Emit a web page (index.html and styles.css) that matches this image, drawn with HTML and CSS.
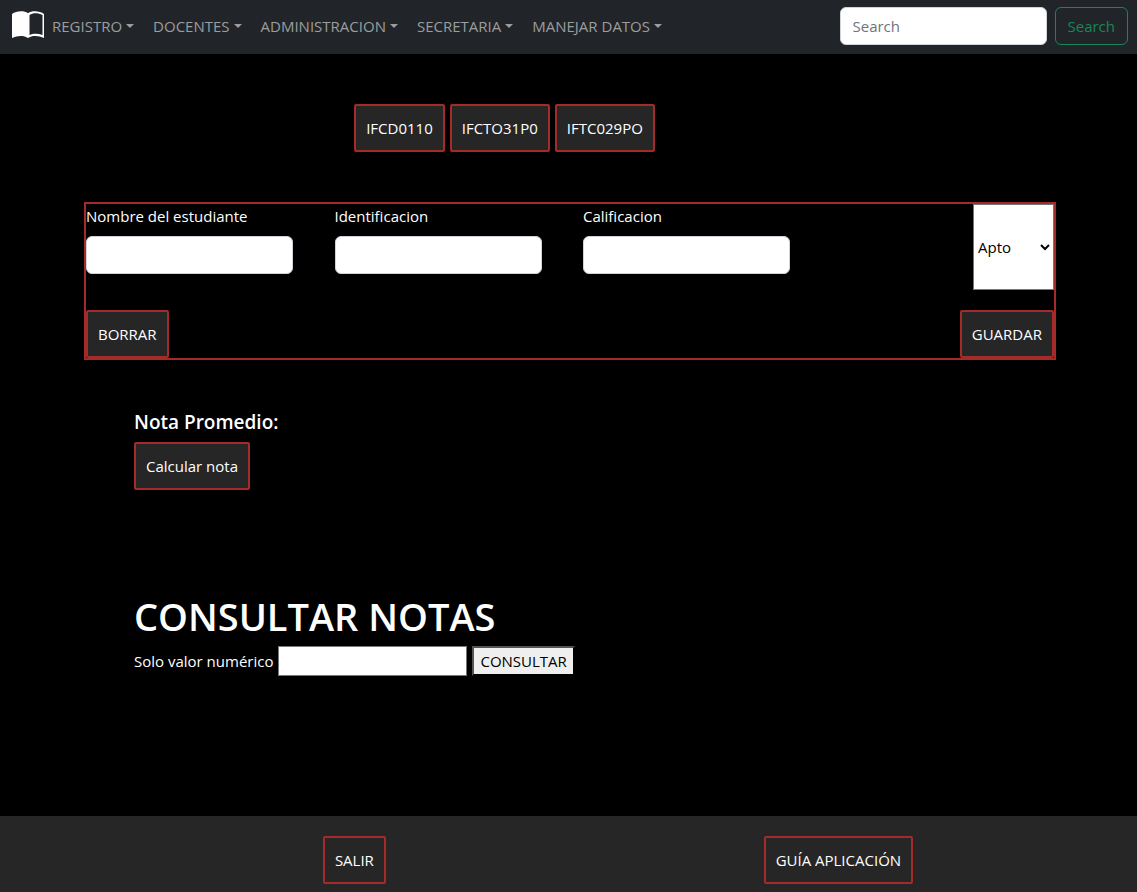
FILE: index.html
```
<!DOCTYPE html>
<html lang="es">
<head>
    <meta charset="UTF-8">
    <meta name="viewport" content="width=device-width, initial-scale=1.0">
    <title>Notas</title>
    <link rel="stylesheet" href="styles.css">
</head>
<body>
    <nav class="navbar">
        <a class="navbar-brand" href="#" aria-label="Inicio">
            <svg width="32" height="28" viewBox="0 0 32 28">
                <path fill="#fff" fill-rule="evenodd" d="M0 3C4 0 12-.7 16 2.300C20-.7 28 0 32 3V27C27 24.500 20 24 16 27C12 24 5 24.500 0 27ZM17.500 4V24C21 22.300 26 22.300 30.500 24V4C26 1.800 21 1.800 17.500 4Z"/>
            </svg>
        </a>
        <ul class="navbar-nav">
            <li><a class="nav-link" href="#">REGISTRO</a></li>
            <li><a class="nav-link" href="#">DOCENTES</a></li>
            <li><a class="nav-link" href="#">ADMINISTRACION</a></li>
            <li><a class="nav-link" href="#">SECRETARIA</a></li>
            <li><a class="nav-link" href="#">MANEJAR DATOS</a></li>
        </ul>
        <form class="search">
            <input class="form-control" type="search" placeholder="Search" aria-label="Search">
            <button class="btn-search" type="button">Search</button>
        </form>
    </nav>

    <main>
        <div class="cursos">
            <button class="boton" type="button">IFCD0110</button>
            <button class="boton" type="button">IFCTO31P0</button>
            <button class="boton" type="button">IFTC029PO</button>
        </div>

        <form class="formulario">
            <div class="campos">
                <div class="campo">
                    <label for="nombre">Nombre del estudiante</label>
                    <input class="form-control" type="text" id="nombre">
                </div>
                <div class="campo">
                    <label for="identificacion">Identificacion</label>
                    <input class="form-control" type="text" id="identificacion">
                </div>
                <div class="campo">
                    <label for="calificacion">Calificacion</label>
                    <input class="form-control" type="text" id="calificacion">
                </div>
                <select class="estado" aria-label="Estado">
                    <option>Apto</option>
                    <option>No apto</option>
                </select>
            </div>
            <div class="acciones">
                <button class="boton" type="button">BORRAR</button>
                <button class="boton" type="button">GUARDAR</button>
            </div>
        </form>

        <section class="promedio">
            <h2>Nota Promedio:</h2>
            <button class="boton" type="button">Calcular nota</button>
        </section>

        <section class="consulta">
            <h1>CONSULTAR NOTAS</h1>
            <form class="consulta-form">
                <label for="valor">Solo valor numérico</label>
                <input type="text" id="valor">
                <button type="button">CONSULTAR</button>
            </form>
        </section>
    </main>

    <footer class="pie">
        <button class="boton" type="button">SALIR</button>
        <button class="boton" type="button">GUÍA APLICACIÓN</button>
    </footer>
</body>
</html>
```
FILE: styles.css
```
* {
    box-sizing: border-box;
}
body {
    margin: 0;
    min-height: 100vh;
    display: flex;
    flex-direction: column;
    background-color: #000;
    color: #fff;
    font-family: 'Segoe UI', 'Open Sans', sans-serif;
    font-size: 15px;
    line-height: 24px;
}
h1, h2 {
    margin: 0;
}
input, select, button {
    font: inherit;
}

/* barra de navegacion */
.navbar {
    display: flex;
    align-items: center;
    min-height: 54px;
    padding: 0 9px 2px 12px;
    background-color: #212529;
}
.navbar-brand {
    display: flex;
    padding-bottom: 2px;
}
.navbar-nav {
    display: flex;
    flex: 1;
    gap: 3px;
    margin: 0;
    padding: 0;
    list-style: none;
}
.nav-link {
    display: block;
    padding: 8px;
    color: #9b9d9e;
    text-decoration: none;
    white-space: nowrap;
}
.nav-link::after {
    content: "";
    display: inline-block;
    margin-left: 4px;
    vertical-align: 4px;
    border-top: 4px solid;
    border-right: 4px solid transparent;
    border-left: 4px solid transparent;
}
.search {
    display: flex;
    gap: 8px;
}
.form-control {
    width: 207px;
    max-width: 100%;
    height: 38px;
    padding: 6px 12px;
    border: 1px solid #ced4da;
    border-radius: 6px;
    background-color: #fff;
    color: #212529;
}
.form-control::placeholder {
    color: #6c757d;
}
.btn-search {
    padding: 6px 12px;
    border: 1px solid #198754;
    border-radius: 6px;
    background-color: transparent;
    color: #198754;
}

.boton {
    padding: 10px;
    border: 2px solid brown;
    border-radius: 2px;
    background-color: #262626;
    color: #fff;
}

main {
    flex: 1;
}
.cursos {
    display: flex;
    justify-content: center;
    gap: 5px;
    padding: 50px 128px 50px 0;
}

/* formulario de notas */
.formulario {
    margin: 0 81px 0 84px;
    border: 2px solid brown;
}
.campos {
    display: grid;
    grid-template-columns: repeat(4, 1fr);
    column-gap: 26px;
    margin-bottom: 20px;
}
.campo {
    margin-bottom: 16px;
}
.campo label {
    display: block;
    margin-bottom: 8px;
}
.estado {
    justify-self: end;
    width: 81px;
    border: 1px solid #767676;
    background-color: #fff;
    color: #000;
}
.acciones {
    display: flex;
    justify-content: space-between;
}

.promedio {
    padding: 50px 134px 0;
}
.promedio h2 {
    margin-bottom: 8px;
    font-size: 19px;
    font-weight: 600;
    line-height: 24px;
}
.consulta {
    padding: 102px 134px 50px;
}
.consulta h1 {
    margin-bottom: 6px;
    font-size: 38px;
    font-weight: 600;
    line-height: 48px;
}
.consulta-form {
    display: flex;
    align-items: center;
    gap: 5px;
}
.consulta-form input {
    width: 189px;
    height: 30px;
    border: 1px solid #767676;
    background-color: #fff;
}
.consulta-form button {
    padding: 1px 6px;
    border: 2px outset #000;
    background-color: #efefef;
    color: #000;
}

.pie {
    display: flex;
    justify-content: space-around;
    padding: 20px 35px 8px 134px;
    background-color: #262626;
}
```
